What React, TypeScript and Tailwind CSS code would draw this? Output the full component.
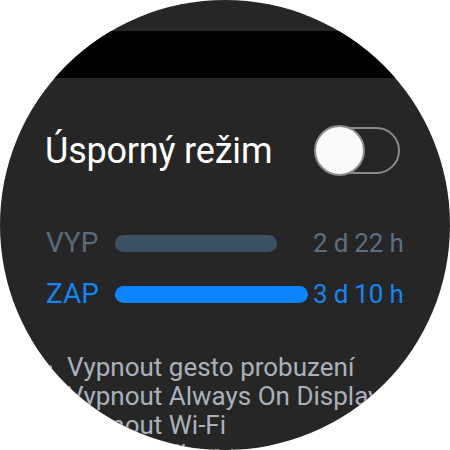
import React from "react";

// ── Data ───────────────────────────────────────────────────────────────────
const ROWS = [
  { id: "off", label: "VYP", value: "2 d 22 h", width: 162, tone: "off" },
  { id: "on", label: "ZAP", value: "3 d 10 h", width: 193, tone: "on" },
];

const ITEMS = [
  "Vypnout gesto probuzení",
  "Vypnout Always On Display",
  "Vypnout Wi-Fi",
  "Omezit výkon procesoru",
];

// ── Toggle ─────────────────────────────────────────────────────────────────
function Toggle() {
  return (
    <div className="relative w-[86px] h-[51px]">
      <div className="absolute left-[14px] right-0 top-[2px] bottom-[2px] rounded-full border-2 border-[#8a8a8a]" />
      <div className="absolute left-0 top-0 w-[51px] h-[51px] rounded-full bg-[#fafafa] border-2 border-[#8a8a8a]" />
    </div>
  );
}

// ── Page ───────────────────────────────────────────────────────────────────
export default function App() {
  return (
    <div className="w-[450px] h-[450px] bg-white" style={{ fontFamily: "Roboto, 'Noto Sans', sans-serif" }}>
      <div className="w-[450px] h-[450px] rounded-full overflow-hidden bg-[#262626] flex flex-col">
        <div className="mt-[31px] h-[47px] bg-black shrink-0" />

        <div className="mt-[47px] flex items-center pl-[45px] pr-[50px] h-[51px] shrink-0">
          <span className="flex-1 text-white text-[36px] leading-none tracking-[-0.2px]">Úsporný režim</span>
          <Toggle />
        </div>

        <div className="mt-[50px] flex flex-col gap-[17px] pl-[46px]">
          {ROWS.map((r) => {
            const on = r.tone === "on";
            return (
              <div key={r.id} className="flex items-center h-[34px]">
                <span className={`w-[69px] text-[28px] leading-none ${on ? "text-[#1485f5]" : "text-[#586b7e]"}`}>
                  {r.label}
                </span>
                <div className="w-[198px]">
                  <div
                    className={`h-[17px] rounded-full ${on ? "bg-[#0a84ff]" : "bg-[#3c5064]"}`}
                    style={{ width: r.width }}
                  />
                </div>
                <span className={`text-[26px] leading-none tracking-[-0.2px] ${on ? "text-[#1485f5]" : "text-[#5a6e84]"}`}>
                  {r.value}
                </span>
              </div>
            );
          })}
        </div>

        <ul className="mt-[42px] flex flex-col">
          {ITEMS.map((t) => (
            <li key={t} className="flex items-center h-[29px] pl-[47px] text-[26px] leading-[29px] text-[#a9b2bb] whitespace-nowrap">
              <span className="w-[5px] h-[5px] rounded-full bg-[#a9b2bb] mr-[15px] shrink-0" />
              {t}
            </li>
          ))}
        </ul>
      </div>
    </div>
  );
}
